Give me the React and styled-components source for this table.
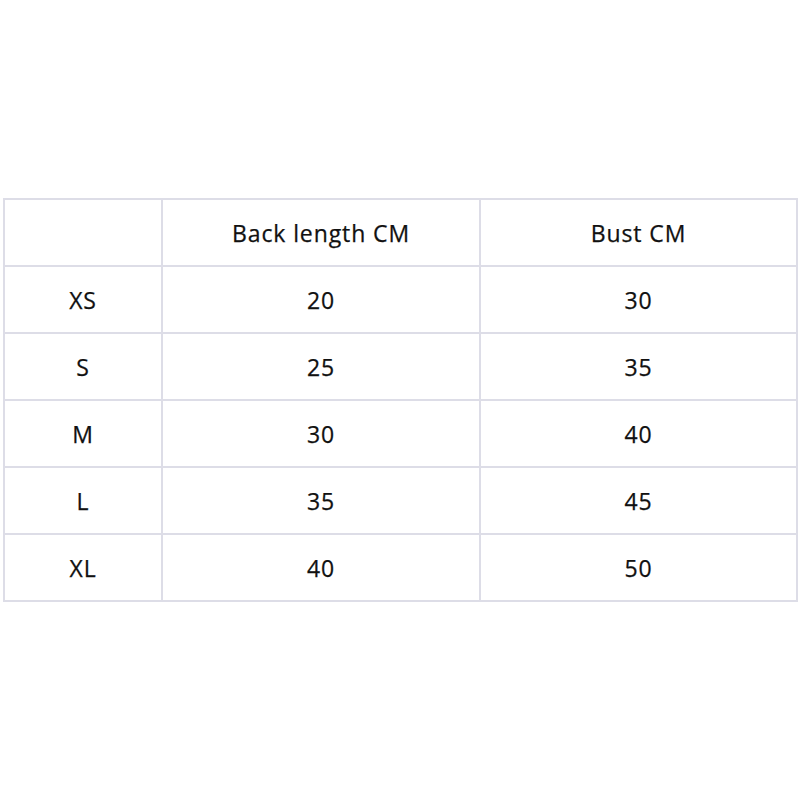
import React from 'react'
import styled, { createGlobalStyle } from 'styled-components'

const Global = createGlobalStyle`
  html, body {
    margin: 0;
    padding: 0;
    background: #fff;
  }
`

const Page = styled.div`
  width: 800px;
  height: 800px;
  box-sizing: border-box;
  padding: 198px 2px 0 3px;
`

const Table = styled.table`
  width: 795px;
  border-collapse: collapse;
  table-layout: fixed;
  font-family: "Open Sans", "Noto Sans", sans-serif;
  font-size: 23px;
  letter-spacing: 0.9px;
  color: #111;
  -webkit-text-stroke: 0.25px #111;
`

const Cell = styled.td`
  height: 65px;
  padding: 0;
  border: 2px solid #dddde7;
  text-align: center;
  vertical-align: middle;
  width: ${props => props.width || 'auto'};
`

const rows = [
  ['XS', '20', '30'],
  ['S', '25', '35'],
  ['M', '30', '40'],
  ['L', '35', '45'],
  ['XL', '40', '50'],
]

const App = () => {
  return <Page>
    <Global />
    <Table>
      <tbody>
        <tr>
          <Cell width='156px'></Cell>
          <Cell width='316px'>Back length CM</Cell>
          <Cell>Bust CM</Cell>
        </tr>
        {rows.map((row, index) => {
          return <tr key={index}>
            {row.map((value, i) => <Cell key={i}>{value}</Cell>)}
          </tr>
        })}
      </tbody>
    </Table>
  </Page>
}

export default App
